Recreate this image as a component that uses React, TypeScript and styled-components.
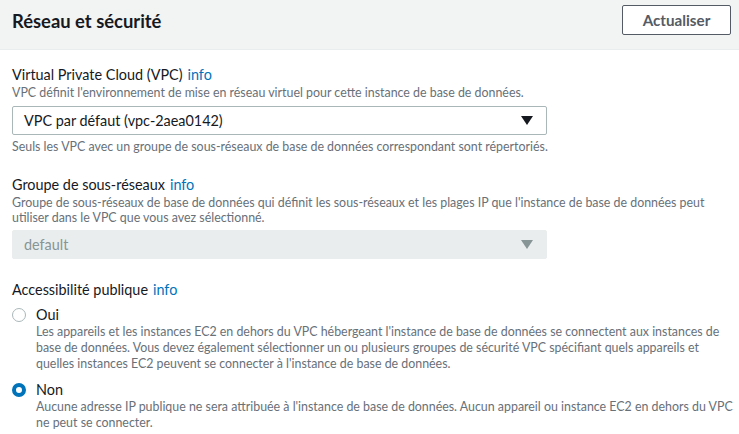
import React from "react";
import styled, { createGlobalStyle } from "styled-components";

const Global = createGlobalStyle`
  html, body { margin: 0; padding: 0; background: #ffffff; }
  body { font-family: Lato, "Liberation Sans", sans-serif; color: #16191f; }
  * { box-sizing: border-box; }
`;

const Page = styled.div`
  width: 739px;
  height: 434px;
  overflow: hidden;
  background: #ffffff;
`;

const Header = styled.div`
  height: 50px;
  background: #f2f3f3;
  border-bottom: 1px solid #eaeded;
  display: flex;
  align-items: flex-start;
  justify-content: space-between;
  padding: 0 8px 0 12px;
`;

const Title = styled.h2`
  margin: 0;
  padding-top: 9px;
  font-size: 18.4px;
  line-height: 24px;
  font-weight: 700;
  color: #16191f;
`;

const Button = styled.button`
  margin-top: 5px;
  width: 109px;
  height: 30px;
  border: 1px solid #545b64;
  border-radius: 2px;
  background: #ffffff;
  color: #545b64;
  font-family: inherit;
  font-size: 15.2px;
  font-weight: 700;
  padding: 0;
`;

const Content = styled.div`
  padding: 15px 12px 0 12px;
  display: flex;
  flex-direction: column;
`;

const Field = styled.div<{ $mt?: number }>`
  display: flex;
  flex-direction: column;
  margin-top: ${(p) => p.$mt ?? 0}px;
`;

const Label = styled.div`
  font-size: 14.4px;
  line-height: 20px;
  color: #16191f;
`;

const Info = styled.span`
  color: #0073bb;
  margin-left: 5px;
`;

const Desc = styled.div<{ $lh?: number; $mt?: number }>`
  font-size: 12.4px;
  line-height: ${(p) => p.$lh ?? 16}px;
  margin-top: ${(p) => p.$mt ?? 0}px;
  color: #687078;
  white-space: nowrap;
`;

const Select = styled.div<{ $disabled?: boolean }>`
  margin-top: 5px;
  width: 535px;
  height: 29px;
  display: flex;
  align-items: center;
  justify-content: space-between;
  padding: 0 13px 0 11px;
  border: 1px solid ${(p) => (p.$disabled ? "#eaeded" : "#aab7b8")};
  border-radius: 2px;
  background: ${(p) => (p.$disabled ? "#eaeded" : "#ffffff")};
  color: ${(p) => (p.$disabled ? "#879596" : "#16191f")};
  font-size: 14.4px;
`;

const Arrow = styled.span<{ $disabled?: boolean }>`
  width: 0;
  height: 0;
  border-left: 6px solid transparent;
  border-right: 6px solid transparent;
  border-top: 9px solid ${(p) => (p.$disabled ? "#879596" : "#16191f")};
`;

const RadioRow = styled.div<{ $mt?: number }>`
  display: grid;
  grid-template-columns: 24px 1fr;
  margin-top: ${(p) => p.$mt ?? 0}px;
`;

const RadioCircle = styled.span<{ $checked?: boolean }>`
  margin-top: 2px;
  width: 14px;
  height: 14px;
  border-radius: 50%;
  background: #ffffff;
  border: ${(p) => (p.$checked ? "4px solid #0073bb" : "1px solid #aab7b8")};
`;

const RadioBody = styled.div`
  display: flex;
  flex-direction: column;
`;

const RadioLabel = styled.div`
  font-size: 14.4px;
  line-height: 18px;
  color: #16191f;
`;

export default function App() {
  return (
    <Page>
      <Global />
      <Header>
        <Title>Réseau et sécurité</Title>
        <Button>Actualiser</Button>
      </Header>
      <Content>
        <Field>
          <Label>
            Virtual Private Cloud (VPC)<Info>info</Info>
          </Label>
          <Desc>
            VPC définit l'environnement de mise en réseau virtuel pour cette instance de base de données.
          </Desc>
          <Select>
            <span>VPC par défaut (vpc-2aea0142)</span>
            <Arrow />
          </Select>
          <Desc $mt={4}>
            Seuls les VPC avec un groupe de sous-réseaux de base de données correspondant sont répertoriés.
          </Desc>
        </Field>
        <Field $mt={20}>
          <Label>
            Groupe de sous-réseaux<Info>info</Info>
          </Label>
          <Desc $lh={15}>
            Groupe de sous-réseaux de base de données qui définit les sous-réseaux et les plages IP que l'instance de base de données peut
            <br />
            utiliser dans le VPC que vous avez sélectionné.
          </Desc>
          <Select $disabled>
            <span>default</span>
            <Arrow $disabled />
          </Select>
        </Field>
        <Field $mt={21}>
          <Label>
            Accessibilité publique<Info>info</Info>
          </Label>
          <RadioRow $mt={6}>
            <RadioCircle />
            <RadioBody>
              <RadioLabel>Oui</RadioLabel>
              <Desc>
                Les appareils et les instances EC2 en dehors du VPC hébergeant l'instance de base de données se connectent aux instances de
                <br />
                base de données. Vous devez également sélectionner un ou plusieurs groupes de sécurité VPC spécifiant quels appareils et
                <br />
                quelles instances EC2 peuvent se connecter à l'instance de base de données.
              </Desc>
            </RadioBody>
          </RadioRow>
          <RadioRow $mt={9}>
            <RadioCircle $checked />
            <RadioBody>
              <RadioLabel>Non</RadioLabel>
              <Desc>
                Aucune adresse IP publique ne sera attribuée à l'instance de base de données. Aucun appareil ou instance EC2 en dehors du VPC
                <br />
                ne peut se connecter.
              </Desc>
            </RadioBody>
          </RadioRow>
        </Field>
      </Content>
    </Page>
  );
}
